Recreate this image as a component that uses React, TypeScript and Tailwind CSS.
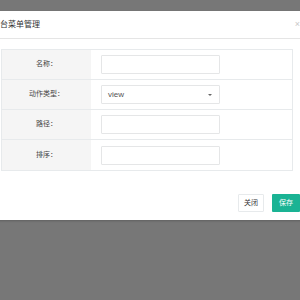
const rows = [
  { label: '名称：', kind: 'input' },
  { label: '动作类型：', kind: 'select', value: 'view' },
  { label: '路径：', kind: 'input' },
  { label: '排序：', kind: 'input' },
]

export default function App() {
  return (
    <div
      className="w-[300px] h-[300px] overflow-hidden bg-[#777777]"
      style={{ fontFamily: '"Liberation Sans", "Noto Sans CJK SC", sans-serif' }}
    >
      <div className="mt-[11px] ml-[-17px] w-[328px] h-[209px] bg-white shadow-[0_1px_2px_rgba(0,0,0,0.2)] flex flex-col">
        {/* header */}
        <div className="h-[28px] px-[9px] border-b border-[#e5e5e5] flex items-center justify-between">
          <span className="text-[8px] text-[#333] leading-none">后台菜单管理</span>
          <span className="mr-[2px] text-[9px] text-[#c8c8c8] leading-none">×</span>
        </div>

        {/* body */}
        <div className="px-[18px] pt-[10px]">
          <div className="border border-[#e7eaec]">
            {rows.map((r, i) => (
              <div
                key={r.label}
                className={`flex h-[30px] ${i < rows.length - 1 ? 'border-b border-[#e7eaec]' : ''}`}
              >
                <div className="w-[89px] bg-[#f5f5f5] flex items-center justify-center text-[7px] text-[#444]">
                  {r.label}
                </div>
                <div className="flex-1 flex items-center pl-[10px]">
                  <div className="w-[119px] h-[19px] border border-[#e5e6e7] rounded-[1px] flex items-center justify-between pl-[6px] pr-[7px]">
                    {r.kind === 'select' && (
                      <>
                        <span className="text-[8px] text-[#555]">{r.value}</span>
                        <span className="w-0 h-0 border-l-[2.5px] border-r-[2.5px] border-t-[2.5px] border-l-transparent border-r-transparent border-t-[#666]" />
                      </>
                    )}
                  </div>
                </div>
              </div>
            ))}
          </div>
        </div>

        {/* footer */}
        <div className="mt-auto mb-[8px] pr-[11px] flex justify-end gap-[8px]">
          <button className="w-[26px] h-[18px] bg-white border border-[#e7eaec] rounded-[1px] text-[7px] text-[#333]">
            关闭
          </button>
          <button className="w-[28px] h-[18px] bg-[#1ab394] rounded-[1px] text-[7px] text-white">
            保存
          </button>
        </div>
      </div>
    </div>
  )
}
